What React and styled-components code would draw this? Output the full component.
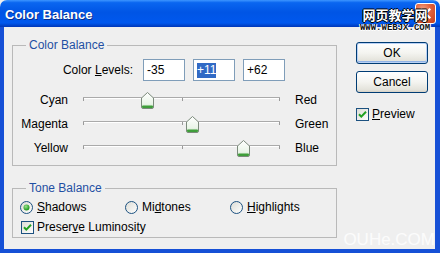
import styled, { createGlobalStyle } from "styled-components";

const GlobalStyle = createGlobalStyle`
  html, body {
    margin: 0;
    padding: 0;
    background: #efefef;
  }
  body {
    font-family: "Liberation Sans", Arial, sans-serif;
    font-size: 12px;
    color: #000;
  }
`;

const sliders = [
  { left: "Cyan", right: "Red", value: -35 },
  { left: "Magenta", right: "Green", value: 11 },
  { left: "Yellow", right: "Blue", value: 62 },
];

const TRACK = 197;

function Thumb() {
  return (
    <svg width="13" height="17" viewBox="0 0 13 17">
      <defs>
        <linearGradient id="thumbFill" x1="0" y1="0" x2="0" y2="1">
          <stop offset="0" stopColor="#ffffff" />
          <stop offset="0.7" stopColor="#eaf5e8" />
          <stop offset="1" stopColor="#c9e6c4" />
        </linearGradient>
      </defs>
      <path
        d="M0.5 6 L6.5 0.5 L12.5 6 L12.5 15 Q12.5 16.5 11 16.5 L2 16.5 Q0.5 16.5 0.5 15 Z"
        fill="url(#thumbFill)"
        stroke="#7b8a7b"
      />
      <rect x="1" y="13.5" width="11" height="2.5" rx="1" fill="#3f9e3a" />
    </svg>
  );
}

function Check() {
  return (
    <svg width="13" height="13" viewBox="0 0 13 13">
      <defs>
        <linearGradient id="boxFill" x1="0" y1="0" x2="1" y2="1">
          <stop offset="0" stopColor="#dcdcd5" />
          <stop offset="1" stopColor="#ffffff" />
        </linearGradient>
      </defs>
      <rect x="0.5" y="0.5" width="12" height="12" fill="url(#boxFill)" stroke="#1c5180" />
      <path d="M3 6.2 L5.3 8.6 L10 3.8" fill="none" stroke="#21a121" strokeWidth="2" />
    </svg>
  );
}

function Radio({ on }) {
  return (
    <svg width="13" height="13" viewBox="0 0 13 13">
      <defs>
        <linearGradient id="radioFill" x1="0" y1="0" x2="1" y2="1">
          <stop offset="0" stopColor="#dcdcd5" />
          <stop offset="1" stopColor="#ffffff" />
        </linearGradient>
        <radialGradient id="radioDot" cx="0.4" cy="0.35" r="0.6">
          <stop offset="0" stopColor="#9be38f" />
          <stop offset="1" stopColor="#1f9a1f" />
        </radialGradient>
      </defs>
      <circle cx="6.5" cy="6.5" r="6" fill="url(#radioFill)" stroke="#1c5180" />
      {on && <circle cx="6.5" cy="6.5" r="3" fill="url(#radioDot)" />}
    </svg>
  );
}

function App() {
  return (
    <>
      <GlobalStyle />
      <Window>
        <TitleBar>
          <Title>Color Balance</Title>
          <CloseButton>
            <svg width="19" height="19" viewBox="0 0 19 19">
              <path d="M5.5 5.5 L13.5 13.5 M13.5 5.5 L5.5 13.5" stroke="#fff" strokeWidth="2.2" strokeLinecap="square" />
            </svg>
          </CloseButton>
        </TitleBar>
        <Body>
          <Main>
            <Group>
              <Legend>Color Balance</Legend>
              <LevelsRow>
                <LevelsLabel>
                  Color <u>L</u>evels:
                </LevelsLabel>
                <LevelBox>-35</LevelBox>
                <LevelBox>
                  <Selected>+11</Selected>
                </LevelBox>
                <LevelBox>+62</LevelBox>
              </LevelsRow>
              {sliders.map((s) => (
                <SliderRow key={s.left}>
                  <SideLabel $align="right">{s.left}</SideLabel>
                  <Track>
                    <Tick $at={0} />
                    <Tick $at={TRACK / 2} />
                    <Tick $at={TRACK - 1} />
                    <ThumbWrap style={{ left: ((s.value + 100) / 200) * TRACK - 6 }}>
                      <Thumb />
                    </ThumbWrap>
                  </Track>
                  <SideLabel $align="left">{s.right}</SideLabel>
                </SliderRow>
              ))}
            </Group>
            <ToneGroup>
              <Legend>Tone Balance</Legend>
              <RadioRow>
                <Option>
                  <Radio on />
                  <span>
                    <u>S</u>hadows
                  </span>
                </Option>
                <Option>
                  <Radio />
                  <span>
                    Mi<u>d</u>tones
                  </span>
                </Option>
                <Option>
                  <Radio />
                  <span>
                    <u>H</u>ighlights
                  </span>
                </Option>
              </RadioRow>
              <CheckRow>
                <Check />
                <span>
                  Preser<u>v</u>e Luminosity
                </span>
              </CheckRow>
            </ToneGroup>
          </Main>
          <Side>
            <Button $primary>OK</Button>
            <Button>Cancel</Button>
            <PreviewRow>
              <Check />
              <span>
                <u>P</u>review
              </span>
            </PreviewRow>
          </Side>
        </Body>
        <Watermark>
          <WatermarkCn>网页教学网</WatermarkCn>
          <WatermarkUrl>WWW.WEBJX.COM</WatermarkUrl>
        </Watermark>
        <Stamp>OUHe.COM</Stamp>
      </Window>
    </>
  );
}

const Window = styled.div`
  position: relative;
  width: 440px;
  height: 253px;
  display: flex;
  flex-direction: column;
  overflow: hidden;
`;

const TitleBar = styled.div`
  height: 27px;
  flex: none;
  display: flex;
  align-items: center;
  justify-content: space-between;
  padding: 0 4px 0 5px;
  box-sizing: border-box;
  border-radius: 7px 7px 0 0;
  background: linear-gradient(
    to bottom,
    #3d95ff 0%,
    #0a66f0 10%,
    #0055e5 45%,
    #0058ee 85%,
    #0044cc 94%,
    #0036b8 100%
  );
`;

const Title = styled.div`
  color: #fff;
  font-family: "Liberation Sans", Arial, sans-serif;
  font-weight: bold;
  font-size: 13px;
  text-shadow: 1px 1px 0 #0b2e8a;
  padding-top: 1px;
`;

const CloseButton = styled.div`
  width: 21px;
  height: 21px;
  box-sizing: border-box;
  border: 1px solid #fff;
  border-radius: 3px;
  display: flex;
  align-items: center;
  justify-content: center;
  background: radial-gradient(circle at 35% 30%, #f0a58a 0%, #e2623c 45%, #c33f1a 100%);
`;

const Body = styled.div`
  flex: 1;
  display: flex;
  background: #efefef;
  border-style: solid;
  border-color: #1650d6;
  border-width: 0 5px 4px 4px;
  padding: 11px 0 0 8px;
  box-sizing: border-box;
`;

const Main = styled.div`
  display: flex;
  flex-direction: column;
  gap: 15px;
  width: 325px;
`;

const Group = styled.fieldset`
  margin: 0;
  padding: 0 0 5px 0;
  min-width: 0;
  width: 325px;
  box-sizing: border-box;
  border: 1px solid #b9b9b9;
  display: flex;
  flex-direction: column;
`;

const ToneGroup = styled(Group)`
  padding: 2px 0 0 0;
`;

const Legend = styled.legend`
  margin-left: 13px;
  padding: 0 3px;
  line-height: 14px;
  color: #1f4fa3;
`;

const LevelsRow = styled.div`
  display: flex;
  align-items: center;
  gap: 8px;
  margin: 7px 0 7px;
  height: 22px;
`;

const LevelsLabel = styled.div`
  width: 120px;
  margin-right: 2px;
  text-align: right;
`;

const LevelBox = styled.div`
  width: 42px;
  height: 22px;
  box-sizing: border-box;
  border: 1px solid #7f9db9;
  background: #fff;
  display: flex;
  align-items: center;
  padding-left: 3px;
`;

const Selected = styled.span`
  background: #316ac5;
  color: #fff;
  line-height: 15px;
`;

const SliderRow = styled.div`
  display: grid;
  grid-template-columns: 55px ${TRACK}px auto;
  column-gap: 15px;
  align-items: center;
  height: 24px;
`;

const SideLabel = styled.div`
  text-align: ${(p) => p.$align};
`;

const Track = styled.div`
  position: relative;
  height: 24px;
  &::before {
    content: "";
    position: absolute;
    left: 0;
    right: 0;
    top: 9px;
    height: 1px;
    background: #aaaaaa;
    box-shadow: 0 1px 0 #ffffff;
  }
`;

const Tick = styled.span`
  position: absolute;
  top: 10px;
  left: ${(p) => p.$at}px;
  width: 1px;
  height: 3px;
  background: #9a9a9a;
`;

const ThumbWrap = styled.div`
  position: absolute;
  top: 4px;
  width: 13px;
  height: 17px;
  line-height: 0;
`;

const RadioRow = styled.div`
  display: flex;
  height: 20px;
  align-items: center;
  padding-left: 7px;
`;

const Option = styled.label`
  width: 105px;
  display: flex;
  align-items: center;
  gap: 4px;
`;

const CheckRow = styled.label`
  display: flex;
  align-items: center;
  gap: 3px;
  height: 20px;
  padding-left: 8px;
`;

const Side = styled.div`
  margin-left: 19px;
  padding-top: 4px;
  width: 72px;
  display: flex;
  flex-direction: column;
  gap: 7px;
`;

const Button = styled.button`
  height: 22px;
  width: 72px;
  box-sizing: border-box;
  border: 1px solid #003c74;
  border-radius: 3px;
  font-family: inherit;
  font-size: 12px;
  color: #000;
  padding: 0;
  background: linear-gradient(to bottom, #ffffff 0%, #f4f4f0 50%, #e3e2da 90%, #d6d0c5 100%);
  box-shadow: ${(p) =>
    p.$primary ? "inset 0 0 0 1px #b9d1f5, inset 0 -1px 0 1px #90b2e6" : "none"};
`;

const PreviewRow = styled.label`
  display: flex;
  align-items: center;
  gap: 3px;
  margin-top: 6px;
  height: 16px;
`;

const Watermark = styled.div`
  position: absolute;
  top: 7px;
  left: 357px;
  width: 76px;
  display: flex;
  flex-direction: column;
  align-items: center;
  gap: 2px;
  pointer-events: none;
`;

const WatermarkCn = styled.div`
  font-family: "Noto Sans CJK SC", sans-serif;
  font-weight: bold;
  font-size: 13px;
  line-height: 15px;
  color: #fff;
  text-shadow: 1px 0 0 #000, -1px 0 0 #000, 0 1px 0 #000, 0 -1px 0 #000;
`;

const WatermarkUrl = styled.div`
  font-family: "Liberation Mono", monospace;
  font-weight: bold;
  font-size: 9px;
  line-height: 8px;
  color: #111;
  text-shadow: 1px 0 0 #fff, -1px 0 0 #fff, 0 1px 0 #fff;
`;

const Stamp = styled.div`
  position: absolute;
  right: 5px;
  bottom: 3px;
  font-family: "Liberation Sans", Arial, sans-serif;
  font-size: 17px;
  color: rgba(255, 255, 255, 0.8);
  pointer-events: none;
`;

export default App;
